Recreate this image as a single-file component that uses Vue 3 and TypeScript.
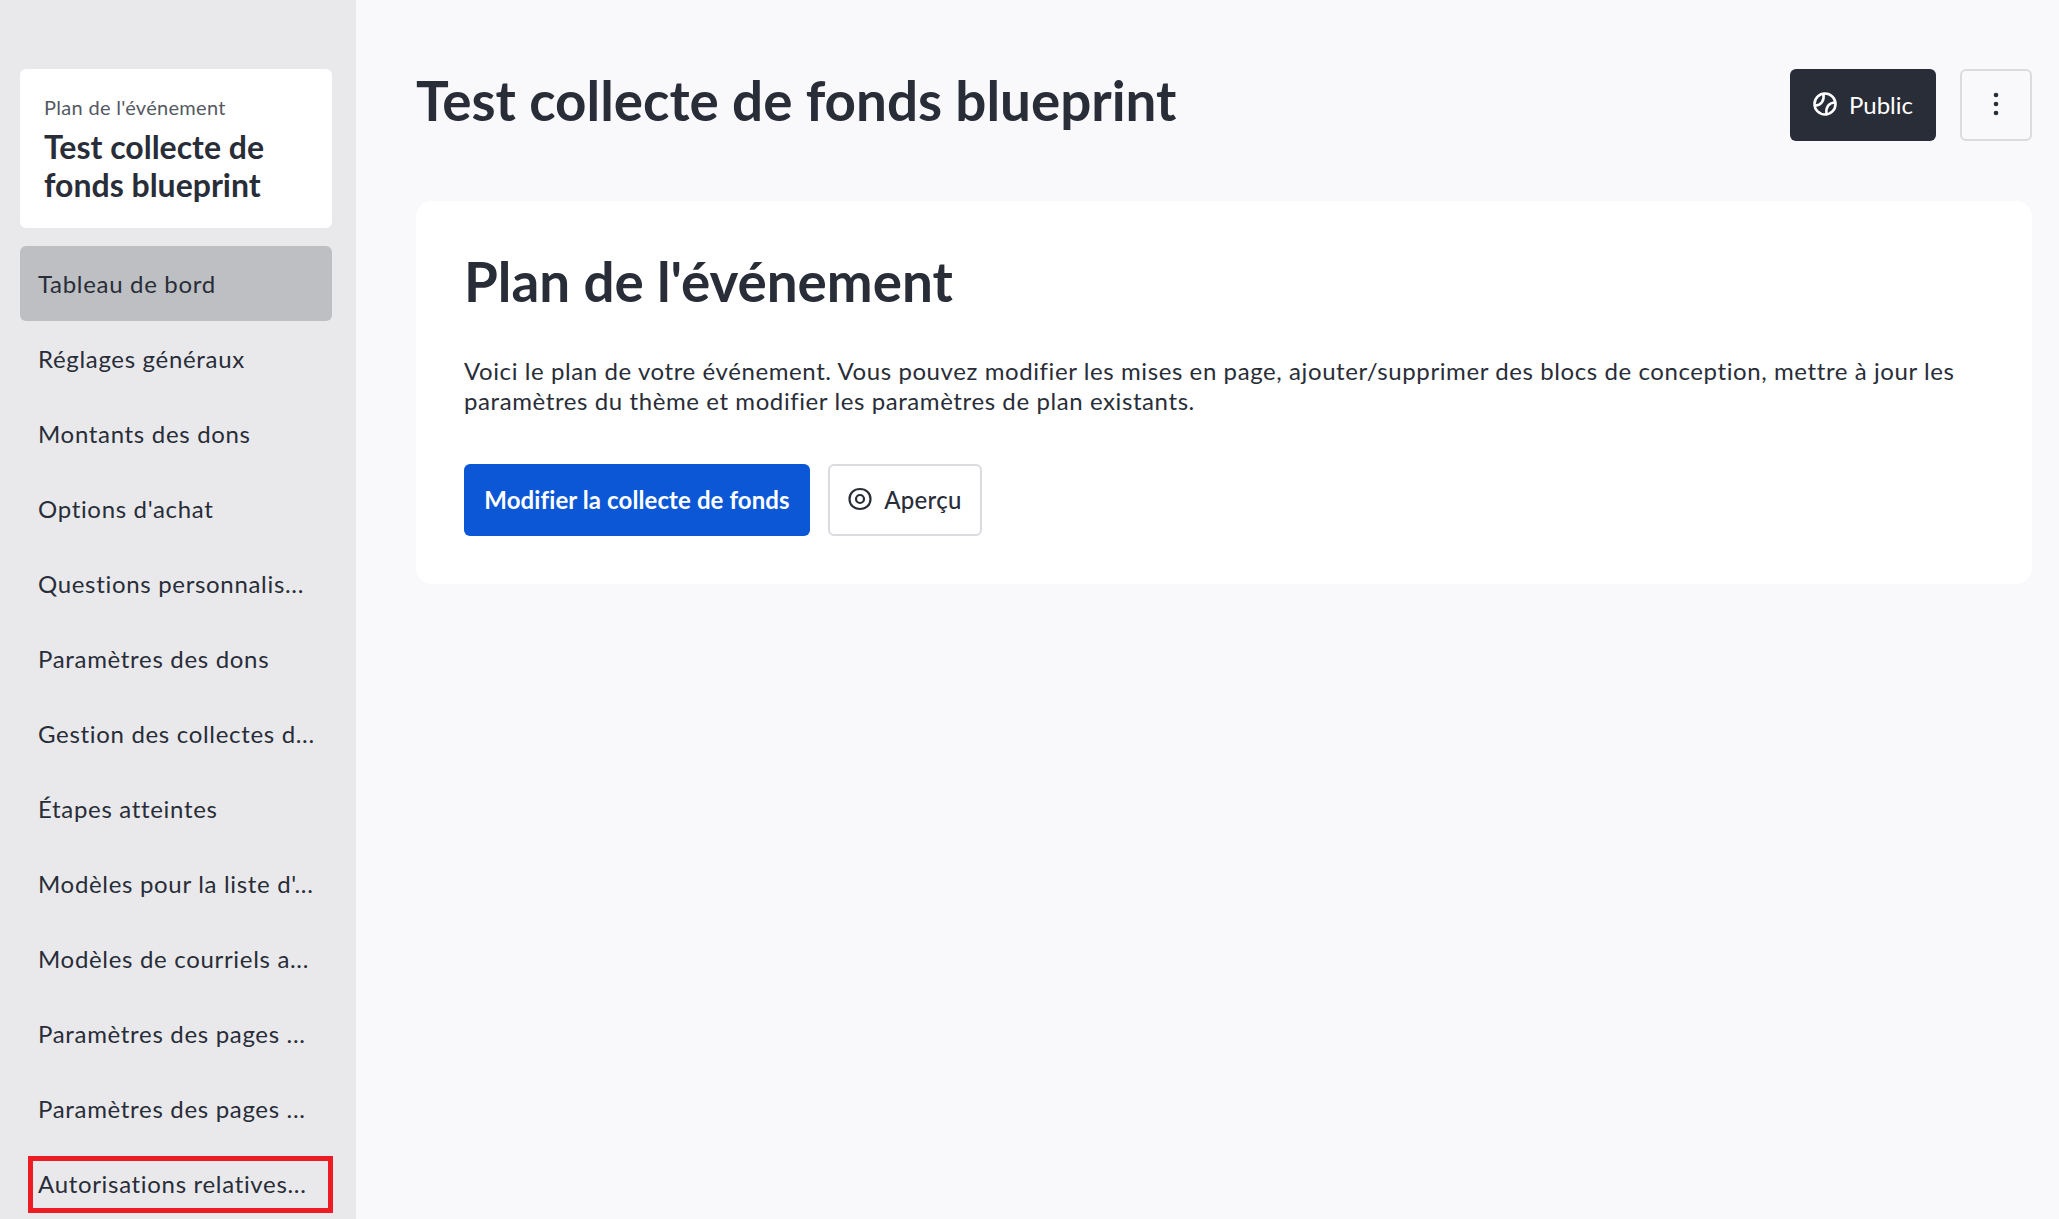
<template>
  <div class="page">
    <aside class="side">
      <div class="event-card">
        <div class="event-label">Plan de l'événement</div>
        <div class="event-name">Test collecte de fonds blueprint</div>
      </div>
      <nav class="nav">
        <a
          v-for="(item, i) in items"
          :key="i"
          class="nav-item"
          :class="{ active: i === 0 }"
        >
          {{ item }}
          <span v-if="i === items.length - 1" class="mark"></span>
        </a>
      </nav>
    </aside>
    <main class="main">
      <header class="top">
        <h1 class="title">Test collecte de fonds blueprint</h1>
        <div class="top-actions">
          <button class="btn dark">
            <svg class="ico" viewBox="0 0 24 24" fill="none" stroke="currentColor" stroke-width="2.600" stroke-linecap="round">
              <circle cx="12" cy="12" r="10.500" />
              <path d="M2.500 13.500C8 13 11.500 9 10.500 2" />
              <path d="M21.500 10.500C16 11 12.500 15 13.500 22" />
            </svg>
            Public
          </button>
          <button class="btn more" aria-label="Plus">
            <svg width="24" height="24" viewBox="0 0 24 24" fill="currentColor">
              <circle cx="12" cy="3" r="2.300" />
              <circle cx="12" cy="12" r="2.300" />
              <circle cx="12" cy="21" r="2.300" />
            </svg>
          </button>
        </div>
      </header>
      <section class="card">
        <h2 class="card-title">Plan de l'événement</h2>
        <p class="card-text">
          Voici le plan de votre événement. Vous pouvez modifier les mises en page, ajouter/supprimer des blocs de conception, mettre à jour les paramètres du thème et modifier les paramètres de plan existants.
        </p>
        <div class="card-actions">
          <button class="btn primary">Modifier la collecte de fonds</button>
          <button class="btn outline">
            <svg class="ico" viewBox="0 0 24 24" fill="none" stroke="currentColor" stroke-width="2.200">
              <path d="M1.500 12C1.500 6 6 2 12 2s10.500 4 10.500 10S18 22 12 22 1.500 18 1.500 12Z" />
              <circle cx="12" cy="12" r="4" />
            </svg>
            Aperçu
          </button>
        </div>
      </section>
    </main>
  </div>
</template>

<script setup lang="ts">
const items: string[] = [
  'Tableau de bord',
  'Réglages généraux',
  'Montants des dons',
  "Options d'achat",
  'Questions personnalis...',
  'Paramètres des dons',
  'Gestion des collectes d...',
  'Étapes atteintes',
  "Modèles pour la liste d'...",
  'Modèles de courriels a...',
  'Paramètres des pages ...',
  'Paramètres des pages ...',
  'Autorisations relatives...',
];
</script>

<style>
html, body { margin: 0; background: #f9f9fb; }
</style>

<style scoped>
.page { display: flex; height: 1219px; overflow: hidden; font-family: Lato, "Liberation Sans", sans-serif; color: #282d38; background: #f9f9fb; }
.side { width: 356px; flex: none; box-sizing: border-box; background: #e9e9ec; padding: 69px 24px 0 20px; overflow: hidden; }
.event-card { height: 159px; box-sizing: border-box; background: #fff; border-radius: 6px; padding: 23px 24px 0; margin-bottom: 18px; }
.event-label { font-size: 20px; line-height: 30px; letter-spacing: 0.3px; color: #545963; }
.event-name { font-size: 32px; line-height: 38px; font-weight: 700; margin-top: 6px; letter-spacing: 0; }
.nav { display: flex; flex-direction: column; }
.nav-item { position: relative; display: block; height: 75px; flex: none; line-height: 75px; padding-left: 18px; border-radius: 6px; font-size: 24px; letter-spacing: 0.68px; white-space: nowrap; color: #282d38; }
.nav-item.active { background: #bebfc3; }
.mark { position: absolute; left: 8px; top: 10px; width: 305px; height: 57px; box-sizing: border-box; border: 5px solid #ed1c24; }
.main { flex: 1; min-width: 0; box-sizing: border-box; padding: 69px 27px 0 60px; }
.top { display: flex; justify-content: space-between; align-items: flex-start; margin-bottom: 60px; }
.title { margin: 0; font-size: 54.750px; line-height: 64px; font-weight: 700; margin-top: -1px; }
.top-actions { display: flex; gap: 24px; }
.btn { display: inline-flex; align-items: center; justify-content: center; height: 72px; box-sizing: border-box; border-radius: 6px; border: 2px solid transparent; font-family: inherit; font-size: 24px; cursor: pointer; padding: 0 0 2px; }
.ico { width: 24px; height: 24px; flex: none; margin-right: 12px; }
.dark { width: 146px; background: #282d38; color: #fff; }
.more { width: 72px; background: transparent; border-color: #dadbdf; color: #282d38; }
.card { background: #fff; border-radius: 16px; height: 383px; box-sizing: border-box; padding: 48px; }
.card-title { margin: 0; font-size: 54.750px; line-height: 64px; font-weight: 700; }
.card-text { margin: 43px 0 0; font-size: 24px; line-height: 30px; letter-spacing: 0.59px; }
.card-actions { display: flex; gap: 18px; margin-top: 48px; }
.primary { width: 346px; background: #0b57d5; color: #fff; font-weight: 700; letter-spacing: 0.1px; }
.outline { width: 154px; background: #fff; border-color: #dadbdf; color: #282d38; font-weight: 500; letter-spacing: 0.3px; }
</style>
